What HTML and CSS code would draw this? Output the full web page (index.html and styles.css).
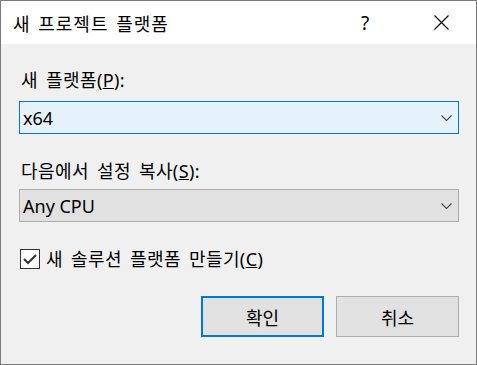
FILE: index.html
```html
<!DOCTYPE html>
<html lang="ko">
<head>
    <meta charset="UTF-8">
    <title>새 프로젝트 플랫폼</title>
    <link rel="stylesheet" href="styles.css">
</head>
<body>
    <div class="dialog">
        <div class="titlebar">
            <span class="title">새 프로젝트 플랫폼</span>
            <span class="help">?</span>
            <span class="close">
                <svg width="15" height="15" viewBox="0 0 15 15"><path d="M0.5 0.5 L14.5 14.5 M14.5 0.5 L0.5 14.5" stroke="#000" stroke-width="1.1" fill="none"/></svg>
            </span>
        </div>
        <div class="content">
            <div class="label label-first">새 플랫폼(<u>P</u>):</div>
            <div class="combo combo-active">
                <span class="value">x64</span>
                <svg class="chevron" width="11" height="6" viewBox="0 0 11 6"><path d="M0.5 0.5 L5.5 5.5 L10.5 0.5" stroke="#505050" stroke-width="1.2" fill="none"/></svg>
            </div>

            <div class="label">다음에서 설정 복사(<u>S</u>):</div>
            <div class="combo">
                <span class="value">Any CPU</span>
                <svg class="chevron" width="11" height="6" viewBox="0 0 11 6"><path d="M0.5 0.5 L5.5 5.5 L10.5 0.5" stroke="#505050" stroke-width="1.2" fill="none"/></svg>
            </div>

            <div class="check-row">
                <span class="checkbox">
                    <svg width="18" height="18" viewBox="0 0 18 18"><path d="M3 9 L7 13 L15 5" stroke="#333" stroke-width="2" fill="none"/></svg>
                </span>
                <span class="check-text">새 솔루션 플랫폼 만들기(<u>C</u>)</span>
            </div>

            <div class="buttons">
                <div class="btn btn-default">확인</div>
                <div class="btn">취소</div>
            </div>
        </div>
    </div>
</body>
</html>
```

FILE: styles.css
```css
body {
    margin: 0;
    font-family: "Noto Sans", "Noto Sans CJK KR", sans-serif;
    font-size: 18px;
    color: #000;
}

.dialog {
    width: 477px;
    height: 365px;
    box-sizing: border-box;
    border: 1px solid #7a7a7a;
    background-color: #f0f0f0;
    display: flex;
    flex-direction: column;
}

.titlebar {
    height: 43px;
    background-color: #fff;
    display: flex;
    align-items: center;
    padding-left: 12px;
}

.title {
    flex: 1;
    letter-spacing: 1px;
    word-spacing: 2px;
}

.help {
    width: 20px;
    margin-right: 53px;
    font-size: 19px;
}

.close {
    display: flex;
    margin-right: 27px;
}

.content {
    padding: 24px 17px 0 18px;
    display: flex;
    flex-direction: column;
}

.label {
    line-height: 24px;
    padding-left: 2px;
    margin-top: 25px;
    margin-bottom: 6px;
    letter-spacing: 0.4px;
    word-spacing: 3px;
}

.label-first {
    margin-top: 0;
    margin-bottom: 9px;
}

.combo {
    height: 33px;
    box-sizing: border-box;
    border: 1px solid #adadad;
    background-color: #e1e1e1;
    display: flex;
    align-items: center;
    justify-content: space-between;
    padding: 0 6px 0 3px;
}

.combo-active {
    border-color: #0078d7;
    background-color: #e5f1fb;
}

.check-row {
    margin-top: 25px;
    display: flex;
    align-items: center;
    gap: 6px;
    line-height: 24px;
    padding-left: 1px;
}

.check-text {
    letter-spacing: 0.4px;
    word-spacing: 3px;
}

.checkbox {
    width: 20px;
    height: 20px;
    box-sizing: border-box;
    border: 1px solid #333;
    background-color: #fff;
    display: flex;
    align-items: center;
    justify-content: center;
}

.buttons {
    margin-top: 25px;
    display: flex;
    justify-content: flex-end;
    gap: 12px;
}

.btn {
    width: 123px;
    height: 41px;
    box-sizing: border-box;
    border: 1px solid #adadad;
    background-color: #e1e1e1;
    display: flex;
    align-items: center;
    justify-content: center;
}

.btn-default {
    border: 2px solid #0078d7;
}
```
